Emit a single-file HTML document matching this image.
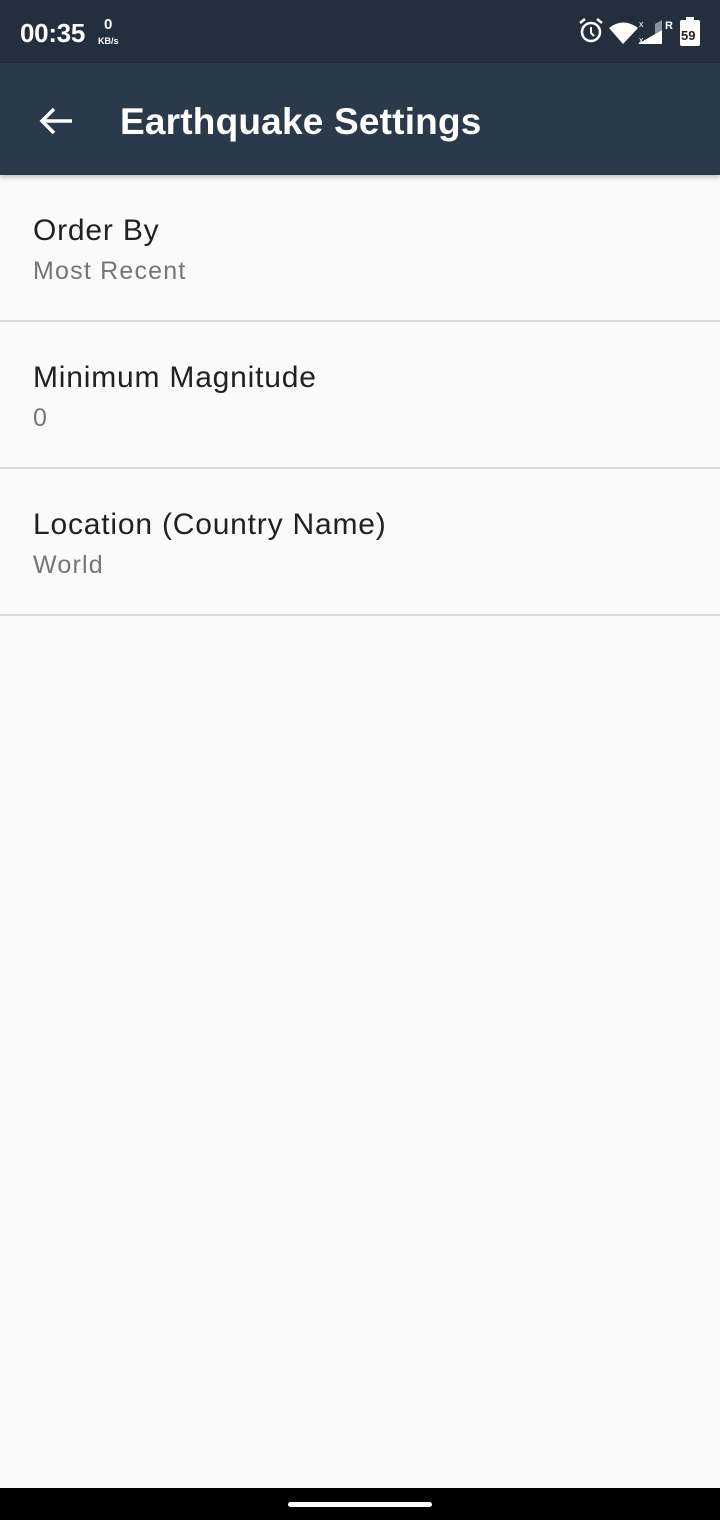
<!DOCTYPE html>
<html><head><meta charset="utf-8"><style>
*{margin:0;padding:0;box-sizing:border-box}
body{width:720px;height:1520px;background:#fafafa;font-family:"Liberation Sans",Roboto,sans-serif;position:relative;overflow:hidden}
.sb{position:absolute;left:0;top:0;width:720px;height:63px;background:#232f3d;color:#fff}
.tb{position:absolute;left:0;top:63px;width:720px;height:112px;background:#2b3a4b;color:#fff;box-shadow:0 2px 5px rgba(0,0,0,.25)}
.item{position:absolute;left:0;width:720px;height:147px;border-bottom:2px solid #dadada}
.t{position:absolute;left:33px;top:39px;font-size:30px;color:#212121;letter-spacing:0.8px}
.s{position:absolute;left:33px;top:82px;font-size:25px;color:#757575;letter-spacing:1.2px}
.nav{position:absolute;left:0;top:1488px;width:720px;height:32px;background:#000}
</style></head><body>
<div class="sb">
<div style="position:absolute;left:20px;top:18px;font-size:26px;font-weight:bold;letter-spacing:-0.3px">00:35</div>
<div style="position:absolute;left:104px;top:16px;font-size:15px;font-weight:bold">0</div>
<div style="position:absolute;left:98px;top:36px;font-size:9px;font-weight:bold">KB/s</div>
<svg style="position:absolute;left:576px;top:16px" width="130" height="32" viewBox="0 0 130 32">
<circle cx="15" cy="16" r="9" fill="none" stroke="#fff" stroke-width="2.5"/>
<path d="M15 11v6l3 3" stroke="#fff" stroke-width="2" fill="none"/>
<path d="M4 7l5-4M26 7l-5-4" stroke="#fff" stroke-width="2.5"/>
<path d="M33 12 Q47 1 62 12 L47 28 Z" fill="#fff"/>
<path d="M62 28 L86 14 L86 28 Z" fill="#fff"/>
<path d="M79 18 L86 14 L86 4 L79 8 Z" fill="#8a949e"/>
<text x="63" y="11" font-size="9" fill="#fff" font-family="Liberation Sans">x</text>
<text x="63" y="27" font-size="9" fill="#fff" font-family="Liberation Sans">x</text>
<text x="89" y="13" font-size="11" fill="#fff" font-family="Liberation Sans" font-weight="bold">R</text>
<rect x="104" y="4" width="20" height="26" rx="2" fill="#fff"/>
<rect x="110" y="1" width="8" height="4" fill="#fff"/>
<text x="105" y="24" font-size="13" font-weight="bold" fill="#222" font-family="Liberation Sans">59</text>
</svg>
</div>
<div class="tb">
<svg style="position:absolute;left:38px;top:43px" width="36" height="30" viewBox="0 0 36 30"><path d="M34 15H4M16 3L4 15l12 12" stroke="#fff" stroke-width="3.5" fill="none"/></svg>
<div style="position:absolute;left:120px;top:38px;font-size:37px;font-weight:bold;letter-spacing:0.2px">Earthquake Settings</div>
</div>
<div class="item" style="top:175px"><div class="t">Order By</div><div class="s">Most Recent</div></div>
<div class="item" style="top:322px"><div class="t">Minimum Magnitude</div><div class="s">0</div></div>
<div class="item" style="top:469px"><div class="t">Location (Country Name)</div><div class="s">World</div></div>
<div class="nav"><div style="position:absolute;left:288px;top:14px;width:144px;height:5px;border-radius:3px;background:#fff"></div></div>
</body></html>
